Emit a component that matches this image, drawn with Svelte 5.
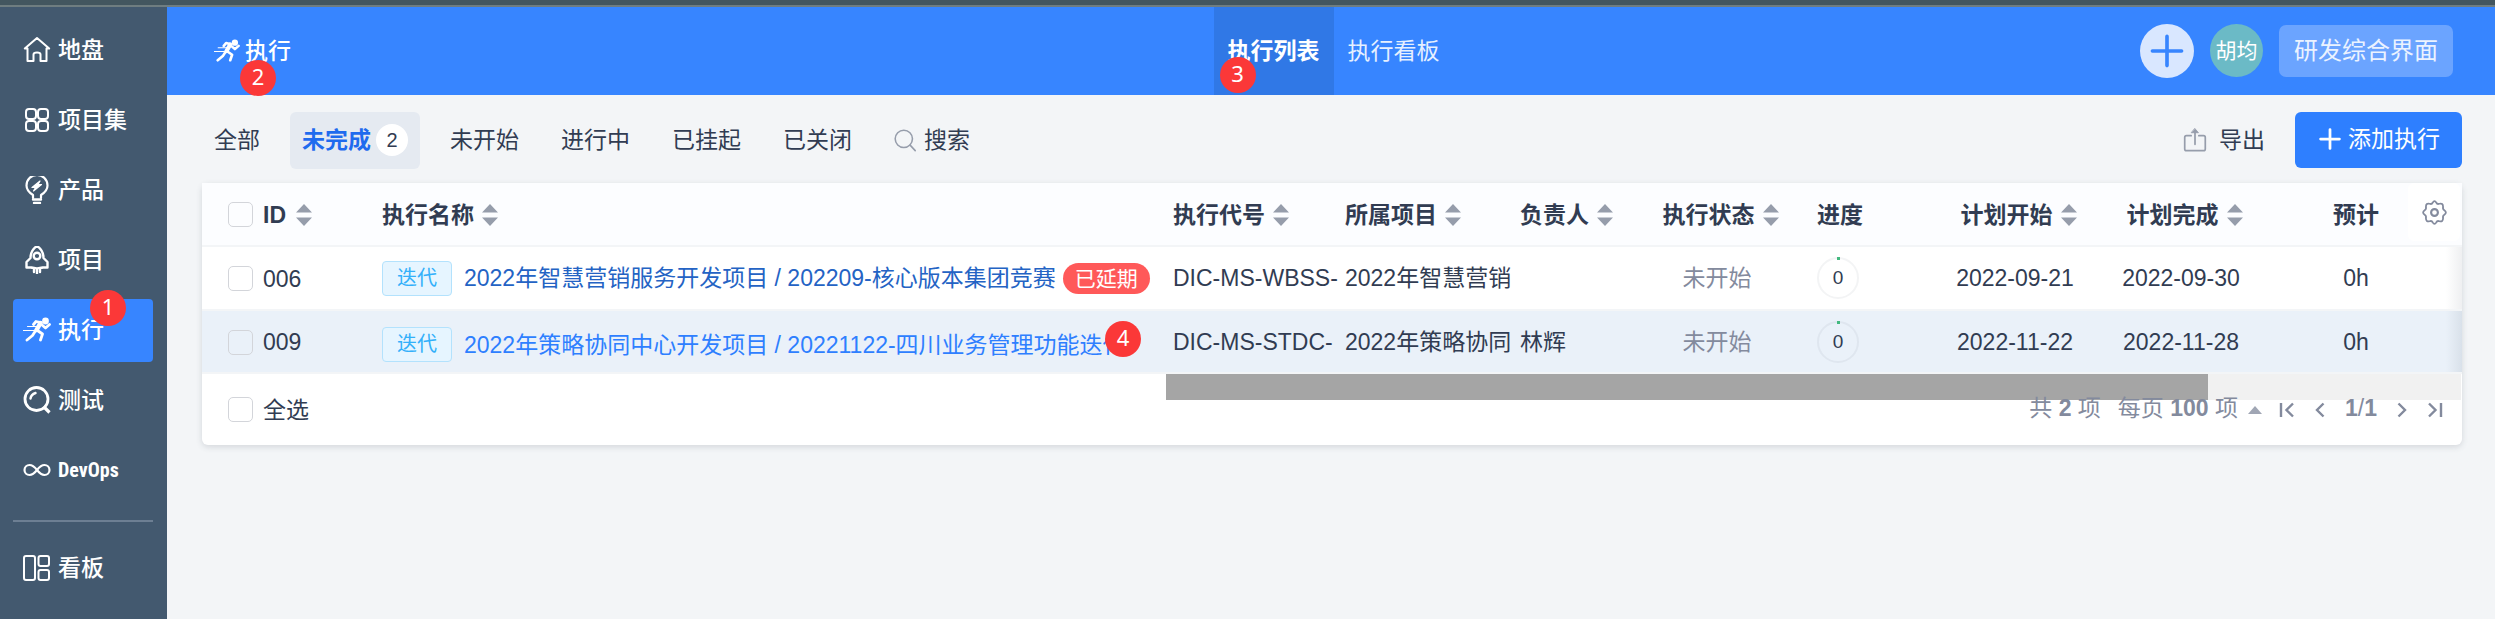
<script>
  const nav = [
    { icon: 'home', label: '地盘' },
    { icon: 'grid', label: '项目集' },
    { icon: 'bulb', label: '产品' },
    { icon: 'rocket', label: '项目' },
    { icon: 'run', label: '执行', active: true, mark: 1 },
    { icon: 'test', label: '测试' },
    { icon: 'loop', label: 'DevOps', latin: true }
  ];
  const filters = [
    { label: '全部' },
    { label: '未完成', count: 2, active: true },
    { label: '未开始' },
    { label: '进行中' },
    { label: '已挂起' },
    { label: '已关闭' }
  ];
  const columns = [
    { key: 'id', label: 'ID', sort: true },
    { key: 'name', label: '执行名称', sort: true },
    { key: 'code', label: '执行代号', sort: true },
    { key: 'project', label: '所属项目', sort: true },
    { key: 'owner', label: '负责人', sort: true },
    { key: 'status', label: '执行状态', sort: true },
    { key: 'progress', label: '进度' },
    { key: 'begin', label: '计划开始', sort: true },
    { key: 'end', label: '计划完成', sort: true },
    { key: 'estimate', label: '预计' }
  ];
  const rows = [
    {
      id: '006', name: '2022年智慧营销服务开发项目 / 202209-核心版本集团竞赛', delayed: true,
      code: 'DIC-MS-WBSS-', project: '2022年智慧营销', owner: '',
      begin: '2022-09-21', end: '2022-09-30'
    },
    {
      id: '009', name: '2022年策略协同中心开发项目 / 20221122-四川业务管理功能迭代', mark: 4, hover: true,
      code: 'DIC-MS-STDC-', project: '2022年策略协同', owner: '林辉',
      begin: '2022-11-22', end: '2022-11-28'
    }
  ];
</script>

{#snippet icon(name)}
  <svg class="icon" viewBox="0 0 28 28" fill="none" stroke="currentColor" stroke-width="2" stroke-linejoin="round" stroke-linecap="round" aria-hidden="true">
    {#if name === 'home'}
      <path d="M4.5 12.5H1.8L14 2l12.2 10.5h-2.7V25h-6v-6.5c0-1.4-1.2-2-3.5-2s-3.500.6-3.500 2V25h-6z" />
    {:else if name === 'grid'}
      <rect x="3" y="3" width="10" height="10" rx="3" /><rect x="15" y="3" width="10" height="10" rx="3" />
      <rect x="3" y="15" width="10" height="10" rx="3" /><rect x="15" y="15" width="10" height="10" rx="3" />
    {:else if name === 'bulb'}
      <path d="M10 22v-3C6 16.500 3.500 13.500 3.500 9.500a10.500 10.500 0 0 1 21 0c0 4-2.500 7-6.500 9.500v3" stroke-width="2.200" />
      <path d="M10 23.500h8M11 27h6" stroke-width="2.400" />
      <path d="M17 5 9 11.500h3.500L10.500 15l8-6.500H15z" fill="currentColor" stroke-width="1.200" />
    {:else if name === 'rocket'}
      <path d="M14 0C9.500 3 7.500 7 7.500 12l-4 4v5.500h4.700c3 .9 8.600.9 11.600 0h4.700V16l-4-4C20.500 7 18.500 3 14 0z" stroke-width="2.400" />
      <circle cx="14" cy="10" r="3.300" stroke-width="2.400" />
      <path d="M11 24v2M14 24v3.500M17 24v2" stroke-width="2.400" />
    {:else if name === 'run'}
      <circle cx="22.500" cy="5" r="3.400" fill="currentColor" stroke="none" />
      <path d="M10.500 8.500 13 5.500l5 1.200-5 7.300-3.500 5.500-5.500 4.500M14.500 14.500l5 3.500-2 6M18.500 8.500l4 3.500 4-3.500" stroke-width="2.800" />
      <path d="M17.500 7 13.500 14" stroke-width="4.500" />
      <path d="M4.500 10.500h9M0.500 14.500h10.500" stroke-width="1.200" />
    {:else if name === 'test'}
      <circle cx="13.500" cy="13" r="11.500" stroke-width="2.800" />
      <path d="m20.500 20.500 6 6" stroke-width="3.200" stroke-linecap="butt" /><path d="M7.500 12.500c.4-2.800 2-4.600 5-5.500" stroke-width="2.400" />
    {:else if name === 'loop'}
      <path d="M14 14c-2.500-3.200-4.600-5-7.500-5a5 5 0 0 0 0 10c2.900 0 5-1.800 7.500-5s4.600-5 7.500-5a5 5 0 0 1 0 10c-2.900 0-5-1.800-7.500-5z" stroke-width="2.200" />
    {:else if name === 'board'}
      <rect x="1" y="2" width="11" height="24" rx="2" /><rect x="15.500" y="2" width="10.500" height="10" rx="2" /><rect x="15.500" y="16" width="10.500" height="10" rx="2" />
    {:else if name === 'search'}
      <circle cx="12.500" cy="12.500" r="11" /><path d="m20.500 20.500 6.500 7" />
    {:else if name === 'export'}
      <path d="M9.500 9H4a2 2 0 0 0-2 2v13.500a2 2 0 0 0 2 2h20a2 2 0 0 0 2-2V11a2 2 0 0 0-2-2h-5.500M14 19V3" />
      <path d="M10 5.500h8L14 .8z" fill="currentColor" stroke-width="1" />
    {:else if name === 'plus'}
      <path d="M14 2v24M2 14h24" stroke-width="3.500" />
    {:else if name === 'gear'}
      <path d="M12 3q2-3.500 4 0 1 2.200 3.500 1.200Q23.500 3 23.600 7.500q-.6 3 1.400 4 3.500 2.500 0 5-2 1-1.400 4-.1 4.500-4.100 3.300-2.500-1-3.500 1.200-2 3.500-4 0-1-2.200-3.500-1.200-4 1.200-4.100-3.300.6-3-1.400-4-3.500-2.500 0-5 2-1 1.400-4Q4.500 3 8.500 4.200 11 5.200 12 3z" stroke-width="2" />
      <circle cx="14" cy="14" r="3.800" stroke-width="2.400" />
    {/if}
  </svg>
{/snippet}

{#snippet pager(d)}
  <svg class="arrow" viewBox="0 0 16 16" fill="none" stroke="currentColor" stroke-width="2.400" aria-hidden="true"><path {d} /></svg>
{/snippet}

<div class="page">
  <div class="strip"></div>
  <div class="shell">
    <nav class="side">
      {#each nav as item}
        <a href="#{item.icon}" class="side-item" class:active={item.active}>
          {@render icon(item.icon)}<span class:latin={item.latin}>{item.label}</span>
          {#if item.mark}<b class="mark side-mark">{item.mark}</b>{/if}
        </a>
      {/each}
      <hr />
      <a href="#board" class="side-item">{@render icon('board')}<span>看板</span></a>
    </nav>

    <div class="main">
      <header>
        <a class="crumb" href="#run">{@render icon('run')}<span>执行</span><b class="mark crumb-mark">2</b></a>
        <nav class="tabs">
          <a class="tab current" href="#list">执行列表<b class="mark tab-mark">3</b></a>
          <a class="tab" href="#kanban">执行看板</a>
        </nav>
        <div class="user">
          <button class="round" aria-label="添加">{@render icon('plus')}</button>
          <button class="avatar">胡均</button>
          <button class="switch">研发综合界面</button>
        </div>
      </header>

      <div class="toolbar">
        <div class="filters">
          {#each filters as f}
            <a class="filter" class:on={f.active} href="#filter">{f.label}{#if f.count}<span class="count">{f.count}</span>{/if}</a>
          {/each}
          <button class="filter search">{@render icon('search')}搜索</button>
        </div>
        <div class="actions">
          <button class="export">{@render icon('export')}导出</button>
          <button class="add">{@render icon('plus')}添加执行</button>
        </div>
      </div>

      <section class="card">
        <table>
          <colgroup>
            {#each columns as c}<col class="w-{c.key}" />{/each}
            <col class="w-set" />
          </colgroup>
          <thead>
            <tr>
              {#each columns as c}
                <th class={c.key}>
                  <span class="head">
                    {#if c.key === 'id'}<input type="checkbox" aria-label="全选" />{/if}
                    {c.label}
                    {#if c.sort}<svg class="sort" viewBox="0 0 16 22" aria-hidden="true"><path d="M8 0l8 8.500H0zM8 22l8-8.500H0z" /></svg>{/if}
                  </span>
                </th>
              {/each}
              <th class="set"><button class="gear" aria-label="设置">{@render icon('gear')}</button></th>
            </tr>
          </thead>
          <tbody>
            {#each rows as r}
              <tr class:hover={r.hover}>
                <td class="id"><label class="head"><input type="checkbox" />{r.id}</label></td>
                <td class="name">
                  <div class="title">
                    <span class="tag">迭代</span>
                    <a href="#item">{r.name}</a>
                    {#if r.delayed}<span class="late">已延期</span>{/if}
                    {#if r.mark}<b class="mark row-mark">{r.mark}</b>{/if}
                  </div>
                </td>
                <td class="code">{r.code}</td>
                <td class="project">{r.project}</td>
                <td class="owner">{r.owner}</td>
                <td class="status">未开始</td>
                <td class="progress"><span class="ring">0</span></td>
                <td class="begin">{r.begin}</td>
                <td class="end">{r.end}</td>
                <td class="estimate">0h</td>
                <td class="set"></td>
              </tr>
            {/each}
          </tbody>
        </table>
        <footer>
          <div class="scroll"><div class="thumb"></div></div>
          <label class="head all"><input type="checkbox" />全选</label>
          <div class="pages">
            <span class="words">共 <strong>2</strong> 项</span>
            <button class="size"><span class="words">每页 <strong>100</strong> 项</span><svg class="caret" viewBox="0 0 14 8" aria-hidden="true"><path d="M7 0l7 8H0z" /></svg></button>
            <button aria-label="首页">{@render pager('M2 1v14M14 1.500 7.500 8l6.500 6.500')}</button>
            <button aria-label="上一页">{@render pager('M11.500 1.500 5 8l6.500 6.500')}</button>
            <span class="words"><strong>1</strong>/<strong>1</strong></span>
            <button aria-label="下一页">{@render pager('M4.500 1.500 11 8l-6.500 6.500')}</button>
            <button aria-label="末页">{@render pager('M14 1v14M2 1.500 8.500 8 2 14.500')}</button>
          </div>
        </footer>
      </section>
    </div>
  </div>
</div>

<style>
  :global(body) { margin: 0; }
  * { box-sizing: border-box; }
  .page {
    min-height: 100vh; display: flex; flex-direction: column; background: #f3f5f7; color: #313c52;
    font: 23px/32px "Liberation Sans", "Noto Sans CJK SC", sans-serif; overflow: hidden;
  }
  a { color: inherit; text-decoration: none; }
  button { font: inherit; color: inherit; background: none; border: 0; padding: 0; display: flex; align-items: center; justify-content: center; white-space: nowrap; }
  .icon { width: 28px; height: 28px; flex: none; }
  .strip { height: 7px; background: #43565f; border-bottom: 2px solid #6f7d80; }
  .shell { flex: 1; display: flex; }
  .side { width: 167px; flex: none; background: #43596f; color: #fff; padding: 12px 14px 0 13px; display: flex; flex-direction: column; gap: 7px; }
  .side-item { position: relative; height: 63px; border-radius: 4px; padding: 0 0 2px 10px; display: flex; align-items: center; gap: 7px; font-weight: 500; }
  .side-item.active { background: #3785ff; }
  .latin { font: bold 20px/32px "Liberation Sans Narrow", "Roboto Condensed", Roboto, sans-serif; }
  hr { width: 100%; height: 2px; border: 0; margin: 11px 0 8px; background: #6d7f93; }
  .mark {
    position: absolute; width: 36px; height: 36px; border-radius: 50%; background: #fb3838; color: #fff;
    font: 22px/32px "Noto Sans", sans-serif; text-align: center; z-index: 2;
  }
  .side-mark { left: 77px; top: -9px; }

  .main { flex: 1; min-width: 0; }
  header { height: 88px; background: #3785ff; color: #fff; display: grid; grid-template-columns: 1fr auto 1fr; align-items: center; padding: 0 42px 0 47px; }
  .crumb { position: relative; justify-self: start; display: flex; align-items: center; gap: 5px; font-weight: 500; }
  .crumb .icon { width: 26px; height: 26px; }
  .crumb-mark { left: 26px; top: 25px; }
  .tabs { display: flex; height: 100%; }
  .tab { position: relative; padding: 0 14px; line-height: 88px; color: #e6f0ff; }
  .tab.current { background: #3078e6; color: #fff; font-weight: bold; }
  .tab-mark { left: 6px; top: 50px; }
  .user { justify-self: end; display: flex; align-items: center; gap: 16px; padding-bottom: 1px; }
  .round { width: 54px; height: 54px; border-radius: 50%; background: #d9e7ff; color: #3785ff; }
  .round .icon { width: 34px; height: 34px; }
  .round .icon :global(path) { stroke-width: 3px; }
  .avatar { width: 53px; height: 53px; border-radius: 50%; background: #6bbac6; color: #fff; font-size: 21px; }
  .switch { height: 52px; padding: 0 15px; border-radius: 7px; background: #6ba4ff; color: #ebf3ff; font-size: 24px; }

  .toolbar { display: flex; justify-content: space-between; padding: 17px 33px 14px 35px; }
  .filters { display: flex; gap: 18px; }
  .filter { height: 57px; padding: 0 12px 2px; display: flex; align-items: center; border-radius: 6px; }
  .filter.on { background: #e5eaf1; color: #1f6bee; font-weight: bold; gap: 5px; }
  .count { width: 32px; height: 32px; border-radius: 50%; background: #fff; color: #313c52; font-weight: normal; font-size: 20px; text-align: center; }
  .search { gap: 8px; }
  .search .icon { width: 22px; height: 24px; color: #969dab; }
  .actions { display: flex; gap: 30px; }
  .export { height: 55px; gap: 12px; }
  .export .icon { width: 24px; height: 24px; color: #969dab; }
  .add { height: 56px; padding: 0 22px 2px 24px; gap: 7px; border-radius: 6px; background: #2e7fff; color: #fff; }
  .add .icon { width: 22px; height: 22px; }

  .card { margin: 0 33px 0 35px; border-radius: 6px; background: #fff; box-shadow: 0 2px 6px rgba(50, 60, 80, .16); }
  table { width: 100%; table-layout: fixed; border-collapse: separate; border-spacing: 0; }
  .w-id { width: 166px; } .w-code { width: 172px; } .w-project { width: 175px; } .w-owner { width: 137px; }
  .w-status { width: 134px; } .w-progress { width: 148px; } .w-begin, .w-end { width: 166px; }
  .w-estimate { width: 144px; } .w-set { width: 54px; }
  th, td { padding: 0 7px; text-align: left; white-space: nowrap; border-bottom: 2px solid #f3f5f7; }
  th { height: 64px; background: #fcfdff; }
  td { height: 64px; }
  .hover td { height: 63px; background: #eaf1f9; }
  .id { padding-left: 26px; }
  .name { padding-left: 14px; }
  .status, .begin, .end, .estimate { text-align: center; }
  th.status, th.begin, th.end { padding: 0 0 0 7px; }
  td.status { color: #838a9d; }
  .progress { padding-left: 33px; }
  .estimate { padding: 0 0 0 40px; }
  .head { display: inline-flex; align-items: center; gap: 8px; vertical-align: middle; }
  .id .head, .all { gap: 10px; }
  .sort { width: 16px; height: 22px; fill: #969dab; }
  input { appearance: none; width: 25px; height: 25px; margin: 0; border: 1px solid #d3d5da; border-radius: 5px; background: transparent; }
  th.set { padding: 0 2px 4px 0; }
  td.set { background: linear-gradient(to right, transparent 70%, rgba(50, 60, 80, .08)); }
  .hover td.set { background: linear-gradient(to right, #eaf1f9 70%, #d9e1ea); }
  .gear { width: 100%; height: 58px; border-radius: 6px; background: #fff; color: #838a9d; }
  .gear .icon { width: 25px; height: 25px; }
  .title { position: relative; display: flex; align-items: center; }
  .tag { flex: none; padding: 0 14px; font-size: 20px; line-height: 33px; border: 1px solid #b3e2fd; border-radius: 4px; background: #e6f5ff; color: #33b0fa; margin-right: 12px; }
  .title a { color: #2463c4; }
  .hover .title a { color: #2e7fff; }
  .hover .title { padding-top: 6px; }
  .late { margin-left: 7px; padding: 0 12px; font-size: 21px; line-height: 31px; border-radius: 16px; background: #ff5959; color: #fff; }
  .row-mark { left: 723px; top: 0; }
  .ring {
    display: block; width: 42px; height: 42px; border-radius: 50%; border: 2px solid rgba(50, 60, 80, .06);
    font-size: 19px; line-height: 38px; text-align: center; position: relative;
  }
  .ring::before { content: ""; position: absolute; left: 18px; top: -2px; width: 3px; height: 3px; background: #43b97f; }
  footer { position: relative; height: 71px; display: flex; align-items: center; justify-content: space-between; padding: 0 19px 0 26px; }
  .scroll { position: absolute; right: 1px; top: 0; width: 1295px; height: 26px; background: #f1f1f1; }
  .thumb { width: 80.5%; height: 100%; background: #a5a5a5; }
  .pages { position: relative; display: flex; align-items: center; gap: 17px; color: #838a9d; }
  .words { padding-bottom: 3px; }
  .size { gap: 10px; }
  .caret { width: 14px; height: 8px; fill: #a0a6b4; }
  .arrow { width: 16px; height: 16px; }
</style>
